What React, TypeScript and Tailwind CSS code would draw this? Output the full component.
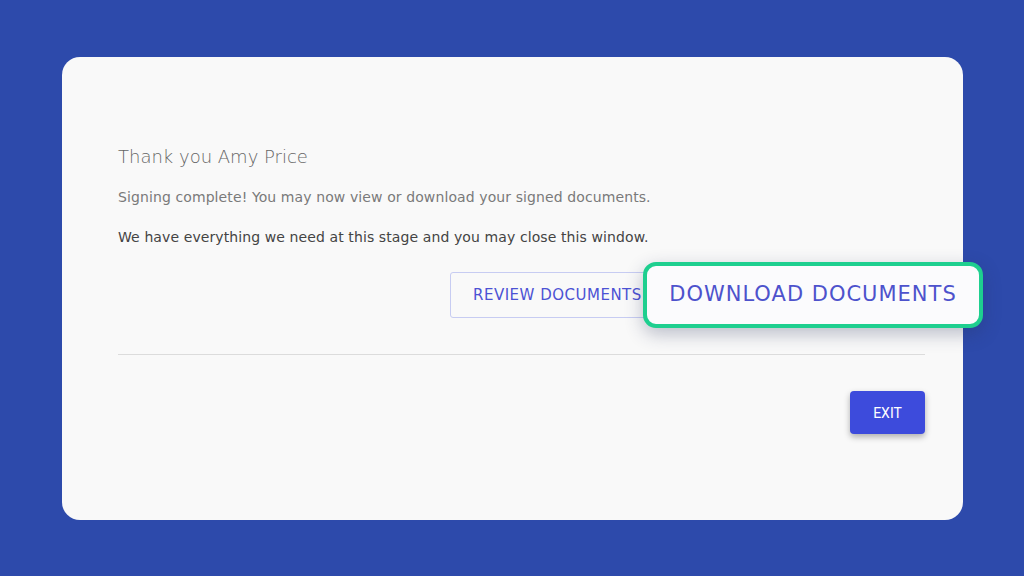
export default function App() {
  const font = { fontFamily: '"DejaVu Sans", "Open Sans", sans-serif' };
  return (
    <div className="w-[1024px] h-[576px] bg-[#2d4aab] flex items-start pt-[57px] pl-[62px]" style={font}>
      <div className="relative w-[901px] h-[463px] bg-[#f9f9f9] rounded-[18px] pl-[56px] pr-[38px] pt-[88px]">
        <h1 className="text-[18px] leading-[24px] text-[#666] font-light">Thank you Amy Price</h1>
        <p className="mt-[19px] text-[14px] leading-[18px] text-[#7a7a7a] tracking-[0.1px]">
          Signing complete! You may now view or download your signed documents.
        </p>
        <p className="mt-[22px] text-[14px] leading-[18px] text-[#444] tracking-[0.1px]">
          We have everything we need at this stage and you may close this window.
        </p>

        {/* action row */}
        <div className="mt-[26px] flex justify-end gap-[10px]">
          <button className="h-[46px] w-[200px] pl-[22px] text-left border border-[#c7ccf2] rounded-[3px] text-[15px] text-[#4c52d4] tracking-[0.5px] whitespace-nowrap overflow-hidden">
            REVIEW DOCUMENTS
          </button>
          <button className="h-[46px] w-[265px] border border-[#c7ccf2] rounded-[3px] text-[13.5px] text-[#4c52d4] invisible">
            DOWNLOAD DOCUMENTS
          </button>
        </div>

        <div className="mt-[36px] border-t border-[#dcdcdc]" />

        <div className="mt-[36px] flex justify-end">
          <button className="h-[43px] w-[75px] bg-[#3d4bdc] rounded-[4px] text-white text-[14px] pt-[2px] shadow-[0_3px_6px_rgba(0,0,0,0.3)]" style={{ fontFamily: '"Roboto", sans-serif' }}>
            EXIT
          </button>
        </div>

        {/* highlighted callout */}
        <div className="absolute left-[581px] top-[205px] w-[340px] h-[66px] rounded-[13px] border-[4px] border-[#1ecf8f] bg-[#fbfbfd] shadow-[0_6px_18px_rgba(40,50,90,0.3)] flex items-center justify-center">
          <span className="text-[21px] text-[#4d52cc] tracking-[1px] whitespace-nowrap">DOWNLOAD DOCUMENTS</span>
        </div>
      </div>
    </div>
  );
}
